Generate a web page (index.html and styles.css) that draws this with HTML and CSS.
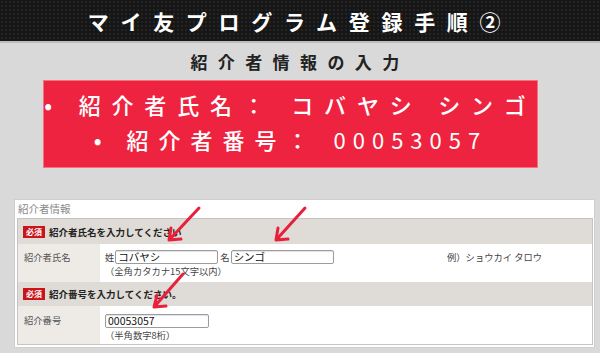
FILE: index.html
```html
<!DOCTYPE html>
<html lang="ja">
<head>
    <meta charset="UTF-8">
    <meta name="viewport" content="width=device-width, initial-scale=1.0">
    <title>マイ友プログラム登録手順②</title>
    <link rel="stylesheet" href="styles.css">
</head>
<body>
    <header class="topbar">
        <h1>マイ友プログラム登録手順②</h1>
    </header>
    <h2 class="subtitle">紹介者情報の入力</h2>

    <div class="callout">
        <p class="callout-wide">• 紹介者氏名： コバヤシ シンゴ</p>
        <p>• 紹介者番号： <span class="digits">00053057</span></p>
    </div>

    <section class="panel">
        <div class="panel-title">紹介者情報</div>
        <div class="form-box">
            <div class="form-head">
                <span class="badge">必須</span>
                <span>紹介者氏名を入力してください</span>
            </div>
            <div class="form-row">
                <div class="form-label">紹介者氏名</div>
                <div class="form-value form-value--name">
                    <div class="fields">
                        <div class="field-line">
                            <span>姓</span><span class="text-input">コバヤシ</span>
                            <span class="gap">名</span><span class="text-input">シンゴ</span>
                        </div>
                        <div class="hint">（全角カタカナ15文字以内）</div>
                    </div>
                    <div class="example">例）ショウカイ タロウ</div>
                </div>
            </div>
            <div class="form-head form-head--short">
                <span class="badge">必須</span>
                <span>紹介番号を入力してください。</span>
            </div>
            <div class="form-row">
                <div class="form-label form-label--low">紹介番号</div>
                <div class="form-value form-value--number">
                    <div class="fields">
                        <div class="field-line">
                            <span class="text-input">00053057</span>
                        </div>
                        <div class="hint">（半角数字8桁）</div>
                    </div>
                </div>
            </div>
        </div>
    </section>

    <!-- red pointer arrows drawn over the form -->
    <svg class="arrows" width="600" height="353" viewBox="0 0 600 353">
        <g fill="none" stroke="#e8203b" stroke-width="3" stroke-linecap="round" stroke-linejoin="round">
            <path d="M199 208 L170 239 M171 228 L169 240 L181 239"/>
            <path d="M305 208 L277 239 M278 228 L276 240 L288 239"/>
            <path d="M183 274 L155 306 M157 295 L154 307 L166 306"/>
        </g>
    </svg>
</body>
</html>
```

FILE: styles.css
```css
body {
    margin: 0;
    width: 600px;
    height: 353px;
    overflow: hidden;
    position: relative;
    background-color: #d9d9d9;
    font-family: "Noto Sans CJK JP", "Noto Sans", sans-serif;
    color: #222;
}
.topbar {
    height: 41px;
    background-color: #161616;
    background-image: radial-gradient(rgba(255, 255, 255, 0.06) 1px, transparent 1px);
    background-size: 4px 4px;
    border-bottom: 2px solid #bdbdbd;
}
.topbar h1 {
    margin: 0;
    color: #fff;
    text-align: center;
    font-size: 21px;
    font-weight: 700;
    line-height: 42px;
    letter-spacing: 11.7px;
}
.subtitle {
    margin: 0;
    padding-top: 1px;
    text-align: center;
    font-size: 17px;
    font-weight: 700;
    line-height: 36px;
    letter-spacing: 10.4px;
    color: #222;
}
.callout {
    box-sizing: border-box;
    width: 495px;
    margin-left: 43px;
    padding: 6px 0 10px;
    background-color: #ee2340;
    border: 1px solid #f2727f;
    color: #fff;
    text-align: center;
}
.callout p {
    margin: 0;
    font-size: 22px;
    font-weight: 500;
    line-height: 35px;
    letter-spacing: 10px;
    white-space: nowrap;
}
.callout .callout-wide {
    letter-spacing: 10.8px;
}
.callout .digits {
    font-weight: 400;
    letter-spacing: 7px;
}
.panel {
    box-sizing: border-box;
    width: 581px;
    margin: 31px 0 0 14px;
    padding: 0 1px 2px 2px;
    background-color: #fff;
    border: 1px solid #cfcfcf;
}
.panel-title {
    height: 18px;
    padding-left: 1px;
    font-size: 10.5px;
    line-height: 18px;
    color: #8a8a8a;
}
.form-box {
    border: 1px solid #c4c4c4;
}
.form-head {
    display: flex;
    align-items: center;
    gap: 4px;
    height: 25px;
    padding-left: 5px;
    background-color: #dfdbd6;
    font-size: 9.5px;
    font-weight: 700;
    color: #222;
}
.form-head--short {
    height: 24px;
}
.badge {
    display: inline-block;
    width: 22px;
    height: 12px;
    background-color: #c9141c;
    color: #fff;
    font-size: 8px;
    line-height: 12px;
    text-align: center;
}
.form-row {
    display: grid;
    grid-template-columns: 82px 1fr;
    height: 38px;
}
.form-label {
    padding: 7px 0 0 6px;
    background-color: #eeebe7;
    font-size: 9.3px;
    line-height: 12px;
    color: #555;
}
.form-label--low {
    padding-top: 8px;
}
.form-value {
    display: grid;
    grid-template-columns: 342px auto;
    padding: 6px 0 0 5px;
    font-size: 9.3px;
    color: #444;
}
.form-value--number {
    padding-top: 8px;
}
.field-line {
    display: flex;
    align-items: center;
    height: 14px;
    color: #444;
}
.field-line .gap {
    margin-left: 2px;
}
.text-input {
    box-sizing: border-box;
    display: inline-block;
    width: 103px;
    height: 14px;
    margin-left: 1px;
    padding: 0 2px;
    border: 1px solid #9c9c9c;
    border-radius: 2px;
    box-shadow: inset 0 1px 1px rgba(0, 0, 0, 0.12);
    background-color: #fff;
    font-size: 10.5px;
    line-height: 12px;
    color: #111;
}
.form-value--number .text-input {
    width: 104px;
    margin-left: 0;
}
.hint {
    margin-top: 1px;
    line-height: 12px;
    color: #444;
}
.example {
    padding-top: 1px;
    line-height: 12px;
    color: #444;
}
.arrows {
    position: absolute;
    top: 0;
    left: 0;
    pointer-events: none;
}
```
